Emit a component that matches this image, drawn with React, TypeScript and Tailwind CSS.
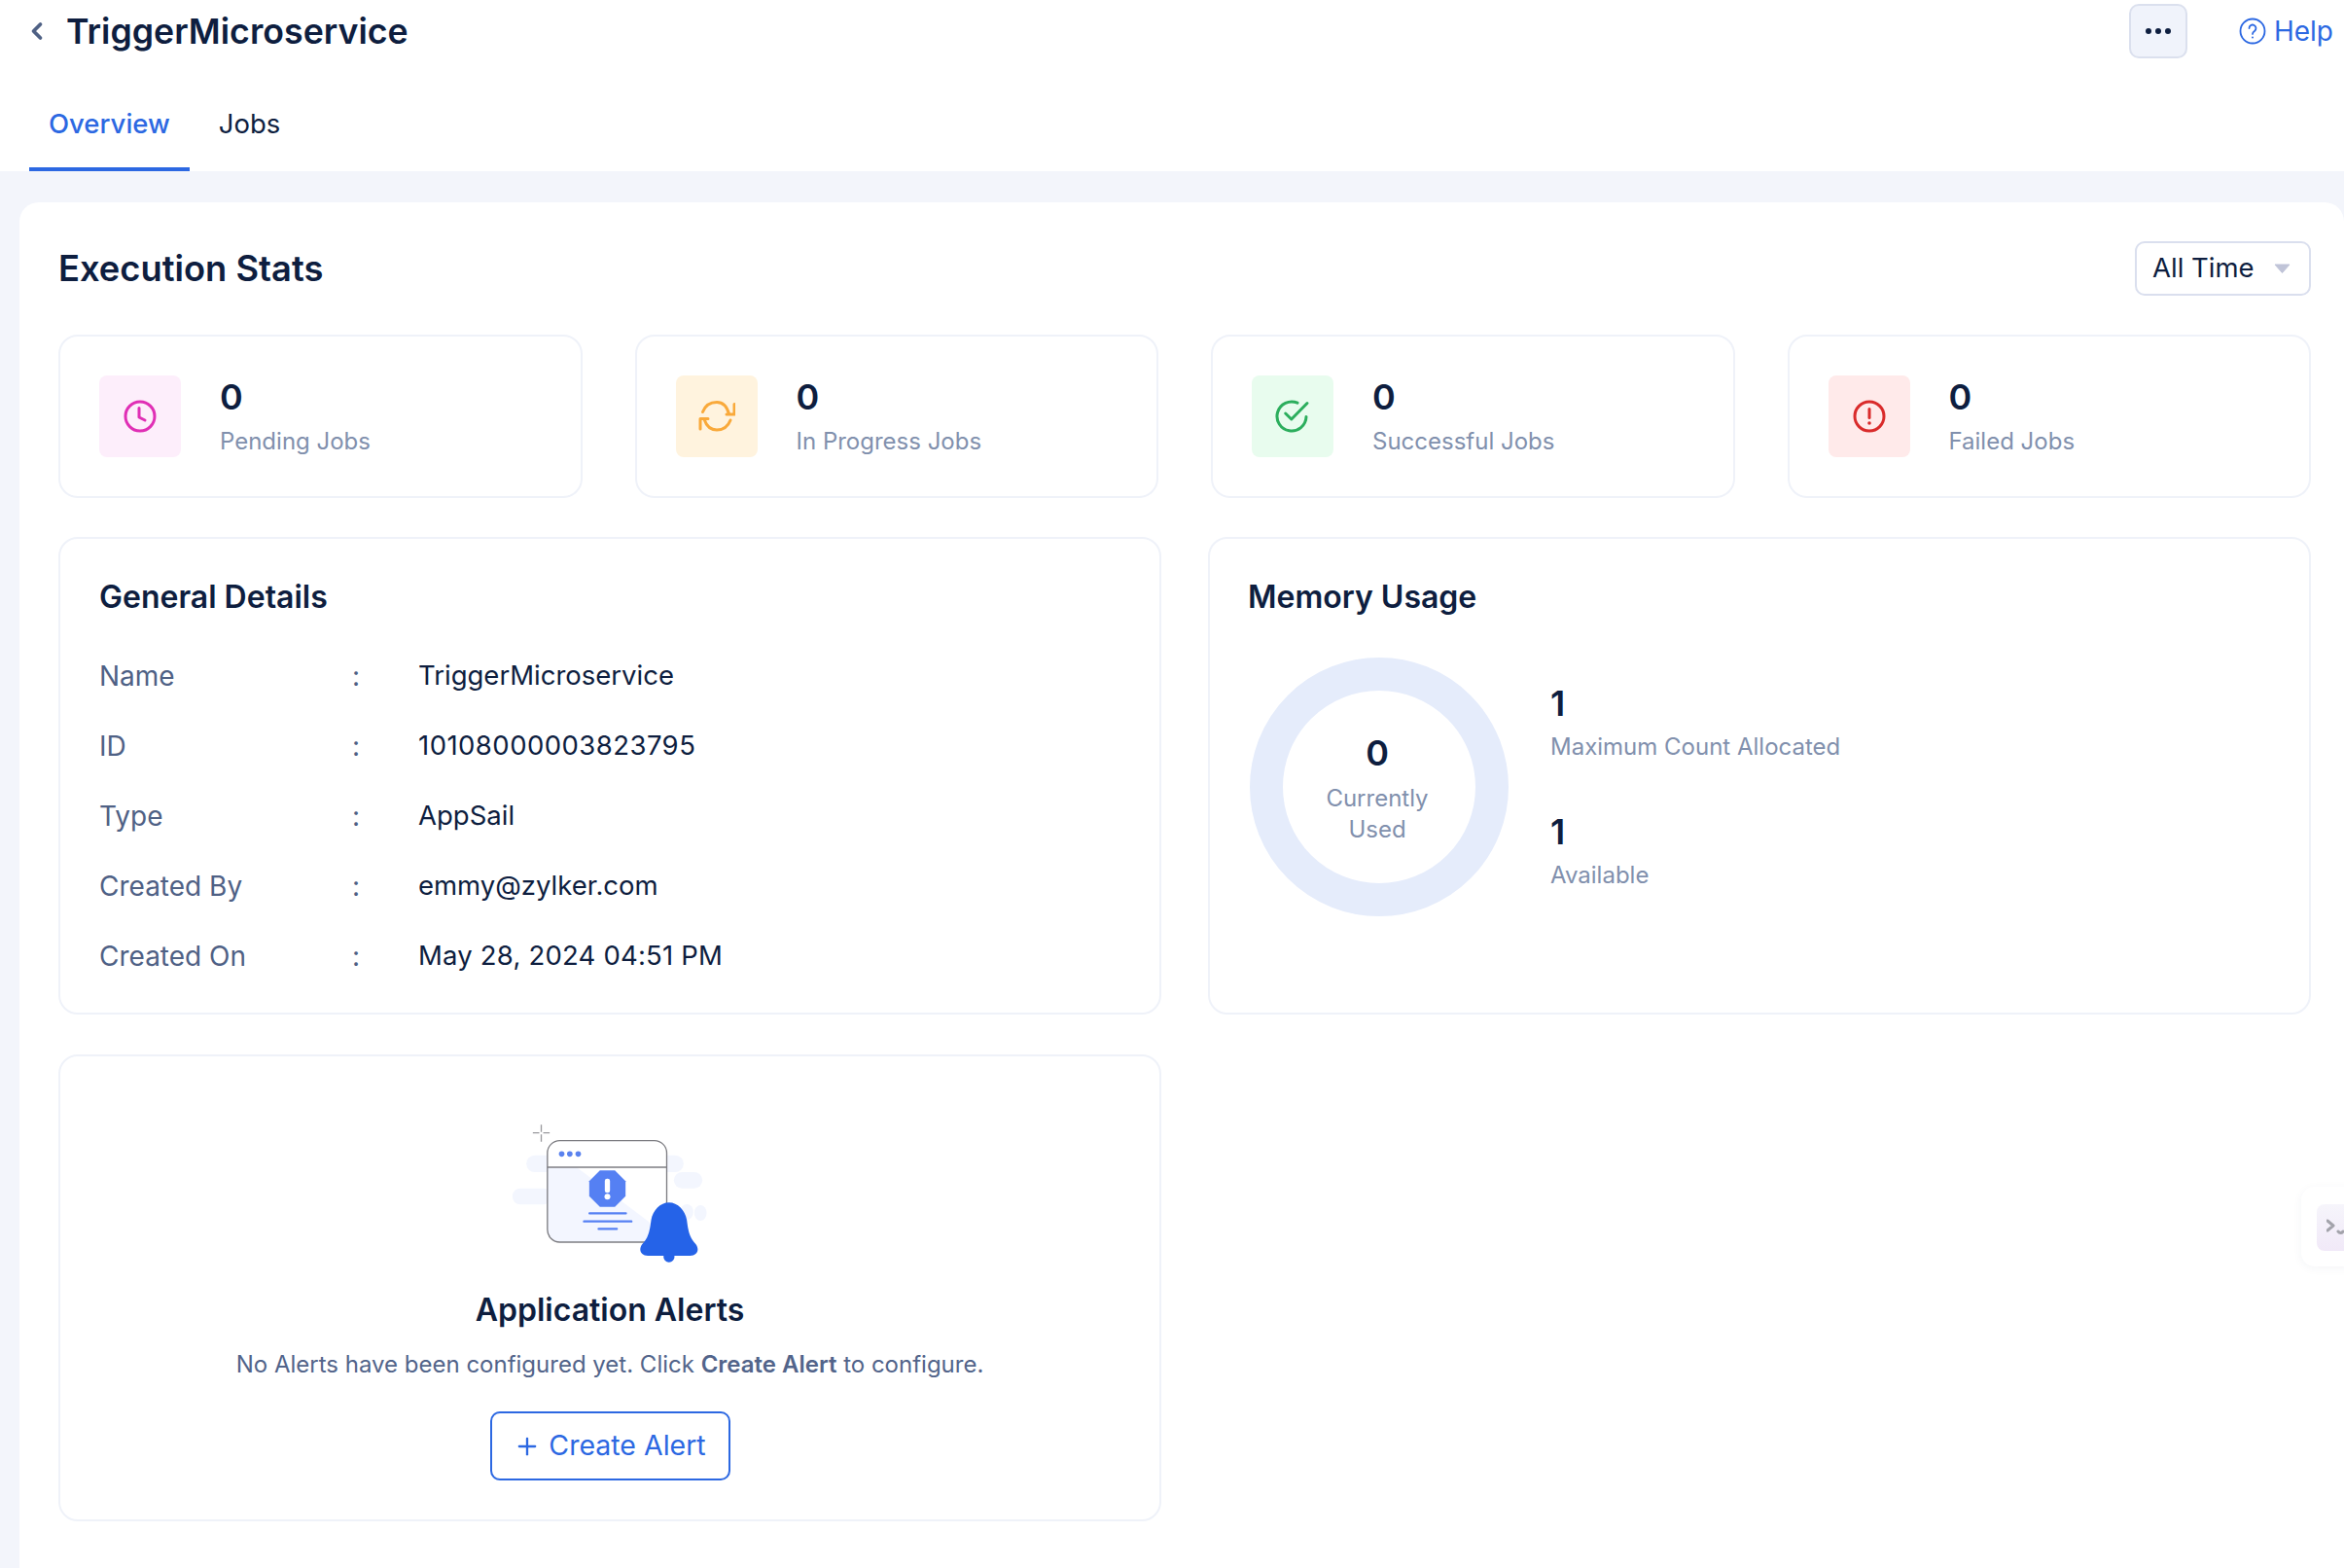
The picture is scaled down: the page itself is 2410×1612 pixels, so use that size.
import { ChevronLeft, Plus } from 'lucide-react'

const stats = [
  { label: 'Pending Jobs', box: 'bg-[#fdeefb]', icon: <PendingIcon /> },
  { label: 'In Progress Jobs', box: 'bg-[#fff3de]', icon: <ProgressIcon /> },
  { label: 'Successful Jobs', box: 'bg-[#e8fcee]', icon: <SuccessIcon /> },
  { label: 'Failed Jobs', box: 'bg-[#ffeaea]', icon: <FailedIcon /> },
]

const details = [
  { name: 'Name', value: 'TriggerMicroservice', spacing: '' },
  { name: 'ID', value: '10108000003823795', spacing: 'tracking-[0.45px]' },
  { name: 'Type', value: 'AppSail', spacing: '' },
  { name: 'Created By', value: 'emmy@zylker.com', spacing: '' },
  { name: 'Created On', value: 'May 28, 2024 04:51 PM', spacing: 'tracking-[0.2px]' },
]

function PendingIcon() {
  return (
    <svg width="34" height="34" viewBox="0 0 34 34" fill="none" stroke="#e02fb5" strokeWidth="3" strokeLinecap="round" strokeLinejoin="round">
      <circle cx="17" cy="17" r="15" />
      <path d="M16 8.500V18l6 3" />
    </svg>
  )
}

function ProgressIcon() {
  return (
    <svg width="38" height="32" viewBox="0 0 38 32" fill="none" stroke="#f9a93a" strokeWidth="3" strokeLinecap="round" strokeLinejoin="round">
      <path d="M4.500 11.500C7 5 12.500 1.500 19 1.500c5.500 0 10 3 12.500 12" />
      <path d="M29 14h8V3.500" />
      <path d="M33 20c-2.500 6.500-8 10-14 10-5.500 0-10.500-3.500-13-11" />
      <path d="M10 18.500H2V29" />
    </svg>
  )
}

function SuccessIcon() {
  return (
    <svg width="36" height="34" viewBox="0 0 36 34" fill="none" stroke="#2cae5d" strokeWidth="3" strokeLinecap="round" strokeLinejoin="round">
      <path d="M23 3.200A15 15 0 1 0 32 17.500" />
      <path d="M10.700 14l6.100 6L33 3.500" />
    </svg>
  )
}

function FailedIcon() {
  return (
    <svg width="34" height="34" viewBox="0 0 34 34" fill="none" stroke="#d92b2b" strokeWidth="3" strokeLinecap="round">
      <circle cx="17" cy="17" r="15" />
      <path d="M17 9.500v9" />
      <circle cx="17" cy="24" r="1.800" fill="#d92b2b" stroke="none" />
    </svg>
  )
}

function AlertsArt() {
  return (
    <svg width="260" height="180" viewBox="-7.5 0 780 540" fill="none">
      <rect x="125" y="170" width="485" height="52" rx="26" fill="#f3f6fe" />
      <rect x="580" y="222" width="88" height="50" rx="25" fill="#f3f6fe" />
      <rect x="82" y="272" width="120" height="50" rx="25" fill="#f3f6fe" />
      <ellipse cx="662" cy="348" rx="19" ry="24" fill="#f3f6fe" />
      <ellipse cx="620" cy="345" rx="20" ry="24" fill="#f3f6fe" />
      <path d="M171 76v22M171 106v22M145 101h20M177 101h20" stroke="#9a9a9e" strokeWidth="4" />
      <rect x="190" y="125" width="368" height="313" rx="38" fill="#fff" />
      <path d="M190 207h368v193a38 38 0 0 1-38 38H228a38 38 0 0 1-38-38z" fill="#f3f6ff" />
      <path d="M280 207h278v210z" fill="#fff" />
      <rect x="190" y="125" width="368" height="313" rx="38" stroke="#7d7d82" strokeWidth="4" />
      <path d="M190 207h368" stroke="#7d7d82" strokeWidth="4" />
      <circle cx="234" cy="166" r="8.500" fill="#5a82ee" />
      <circle cx="259" cy="166" r="8.500" fill="#5a82ee" />
      <circle cx="285" cy="166" r="8.500" fill="#5a82ee" />
      <path d="M352 217h46l33 33v46l-33 33h-46l-33-33v-46z" fill="#5580f3" />
      <rect x="367" y="242" width="16" height="44" rx="7" fill="#fff" />
      <circle cx="375" cy="298" r="9" fill="#fff" />
      <path d="M320 349h112M303 374h146M348 397h56" stroke="#5580f3" strokeWidth="7" strokeLinecap="round" />
      <path
        d="M565 316C538 316 515 340 510 370C505 410 500 425 482 445C470 462 478 480 500 480L630 480C652 480 660 462 648 445C630 425 625 410 620 370C615 340 592 316 565 316Z"
        fill="#2563e8"
      />
      <circle cx="565" cy="483" r="17" fill="#2563e8" />
    </svg>
  )
}

function StatCard({ label, box, icon }: { label: string; box: string; icon: React.ReactNode }) {
  return (
    <div className="flex h-[168px] items-center rounded-[20px] border-2 border-[#eff2f9] pl-[40px]">
      <div className={`flex size-[84px] items-center justify-center rounded-lg ${box}`}>{icon}</div>
      <div className="ml-[40px] pt-[2px]">
        <p className="text-[36px] leading-[44px] font-semibold text-[#0e1e3f]">0</p>
        <p className="mt-[6px] text-[24px] leading-[36px] text-[#8190ad]">{label}</p>
      </div>
    </div>
  )
}

export default function App() {
  return (
    <div className="relative h-[1612px] overflow-hidden bg-[#f3f5fb] font-['Inter','Noto_Sans',sans-serif]">
      <header className="h-[176px] bg-white">
        <div className="flex h-[64px] items-center justify-between pr-[11px]">
          <div className="flex items-center">
            <ChevronLeft className="ml-[24px] size-[28px] text-[#4f6185]" strokeWidth={3.2} />
            <h1 className="ml-[16px] pt-[1px] text-[35.700px] font-semibold text-[#0e1e3f]">TriggerMicroservice</h1>
          </div>
          <div className="flex items-center">
            <button className="flex h-[56px] w-[60px] items-center justify-center gap-[4px] rounded-[10px] border-2 border-[#dbe0ee] bg-[#f0f3fb]">
              <span className="size-[6px] rounded-full bg-[#0e1e3f]" />
              <span className="size-[6px] rounded-full bg-[#0e1e3f]" />
              <span className="size-[6px] rounded-full bg-[#0e1e3f]" />
            </button>
            <div className="ml-[53px] flex items-center gap-[8px] text-[28px] text-[#2c68e2]">
              <svg width="28" height="28" viewBox="0 0 28 28" fill="none" stroke="#2c68e2" strokeWidth="1.800" strokeLinecap="round">
                <circle cx="14" cy="14" r="12.500" />
                <path d="M10.500 11a3.500 3.500 0 1 1 5.500 2.900c-1.300.9-2 1.500-2 3" />
                <circle cx="14" cy="20.500" r="1" fill="#2c68e2" stroke="none" />
              </svg>
              Help
            </div>
          </div>
        </div>
        <nav className="mt-[14px] flex pl-[30px] text-[27.500px]">
          <div className="flex h-[98px] items-center border-b-4 border-[#2c68e2] px-5 pt-[6px] font-medium text-[#2c68e2]">Overview</div>
          <div className="ml-[10px] flex h-[98px] items-center px-5 pt-[6px] pb-1 text-[#0e1e3f]">Jobs</div>
        </nav>
      </header>

      <main className="ml-5 mt-8 h-[1404px] rounded-t-[20px] bg-white pl-[40px] pr-[34px] pt-10">
        <div className="flex h-[56px] items-center justify-between">
          <h2 className="pt-[1px] text-[36.300px] font-semibold text-[#0e1e3f]">Execution Stats</h2>
          <button className="flex h-[56px] w-[181px] items-center rounded-[10px] border-2 border-[#dadfee] pl-[16px] text-[27.500px] text-[#0e1e3f]">
            All Time
            <svg className="ml-[20px]" width="17" height="10" viewBox="0 0 17 10">
              <path d="M1 1h15l-7.500 8.500z" fill="#c0c4d8" stroke="#c0c4d8" strokeLinejoin="round" />
            </svg>
          </button>
        </div>

        <section className="mt-10 grid grid-cols-4 gap-x-[54px]">
          {stats.map((s) => (
            <StatCard key={s.label} {...s} />
          ))}
        </section>

        <section className="mt-10 grid grid-cols-2 gap-x-12 gap-y-[41px]">
          <div className="h-[491px] rounded-[20px] border-2 border-[#eff2f9] pl-[40px] pt-[40px]">
            <h3 className="text-[32px] leading-[40px] font-semibold text-[#0e1e3f]">General Details</h3>
            <div className="mt-[25px] text-[28px]">
              {details.map((d) => (
                <div key={d.name} className="grid h-[72px] grid-cols-[260px_68px_1fr] items-center">
                  <span className="text-[#4f6185]">{d.name}</span>
                  <span className="text-[#4f6185]">:</span>
                  <span className={`text-[27.500px] text-[#0e1e3f] ${d.spacing}`}>{d.value}</span>
                </div>
              ))}
            </div>
          </div>

          <div className="h-[491px] rounded-[20px] border-2 border-[#eff2f9] pl-[39px] pt-[40px]">
            <h3 className="text-[32px] leading-[40px] font-semibold text-[#0e1e3f]">Memory Usage</h3>
            <div className="mt-[42px] flex">
              <div className="ml-[2px] flex size-[266px] flex-col items-center justify-center rounded-full border-[34px] border-[#e5ecfb] pt-[2px] pr-1">
                <p className="text-[36px] leading-[44px] font-semibold text-[#0e1e3f]">0</p>
                <p className="mt-[9px] text-center text-[24px] leading-[32px] text-[#8190ad]">
                  Currently
                  <br />
                  Used
                </p>
              </div>
              <div className="ml-[43px] pt-[25px]">
                <p className="text-[36px] leading-[44px] font-semibold text-[#0e1e3f]">1</p>
                <p className="mt-[5px] text-[24px] leading-[36px] text-[#8190ad]">Maximum Count Allocated</p>
                <p className="mt-[47px] text-[36px] leading-[44px] font-semibold text-[#0e1e3f]">1</p>
                <p className="mt-[5px] text-[24px] leading-[36px] text-[#8190ad]">Available</p>
              </div>
            </div>
          </div>

          <div className="flex h-[480px] flex-col items-center rounded-[20px] border-2 border-[#eff2f9] pt-[45px]">
            <AlertsArt />
            <h3 className="mt-4 text-[32px] leading-[40px] font-semibold text-[#0e1e3f]">Application Alerts</h3>
            <p className="mt-[18px] text-[24px] leading-[36px] text-[#52648a]">
              No Alerts have been configured yet. Click <b className="font-semibold">Create Alert</b> to configure.
            </p>
            <button className="mt-[30px] flex h-[71px] w-[247px] items-center justify-center gap-[8px] rounded-[10px] border-2 border-[#2c68e2] text-[28.500px] text-[#2c68e2]">
              <Plus className="size-[28px]" strokeWidth={2} />
              Create Alert
            </button>
          </div>
        </section>
      </main>

      <div className="absolute left-[2366px] top-[1220px] h-[82px] w-[60px] rounded-[14px] bg-white pl-[16px] pt-[18px] shadow-[0_2px_10px_rgba(40,50,90,0.05)]">
        <div className="flex h-[48px] w-[40px] items-center rounded-[8px] bg-gradient-to-b from-[#f6f5fb] to-[#f1e9f8] pl-[10px]">
          <svg width="20" height="20" viewBox="0 0 20 20" fill="none" stroke="#a3a3ab" strokeWidth="3" strokeLinecap="round" strokeLinejoin="round">
            <path d="M1 3l6 5-6 5M12 14c1.500 2 3.500 2 5 0" />
          </svg>
        </div>
      </div>
    </div>
  )
}
